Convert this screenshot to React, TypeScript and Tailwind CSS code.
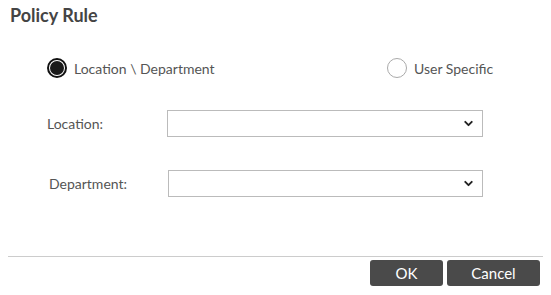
import { ChevronDown } from "lucide-react";

const Radio = ({ checked }: { checked?: boolean }) =>
  checked ? (
    <span className="flex h-[20px] w-[20px] items-center justify-center rounded-full border-[2px] border-[#111] bg-white">
      <span className="h-[14px] w-[14px] rounded-full bg-[#1a1a1a]" />
    </span>
  ) : (
    <span className="h-[20px] w-[20px] rounded-full border border-[#aaa] bg-white" />
  );

const Select = ({ className }: { className: string }) => (
  <div className={`flex h-[27px] items-center justify-end border border-[#bbb] bg-white pr-[7px] ${className}`}>
    <ChevronDown size={13} strokeWidth={3.5} className="text-[#222]" />
  </div>
);

const App = () => {
  return (
    <div className="h-[295px] w-[551px] bg-white font-['Lato',sans-serif] text-[#555]">
      {/* Header */}
      <div className="px-[10px] pt-[4px] text-[18px] font-bold leading-[22px] text-[#444]">Policy Rule</div>

      {/* Mode selection */}
      <div className="mt-[32px] flex h-[20px] items-center pl-[47px] text-[14px]">
        <div className="flex w-[340px] items-center gap-[7px]">
          <Radio checked />
          <span>Location \ Department</span>
        </div>
        <div className="flex items-center gap-[7px]">
          <Radio />
          <span>User Specific</span>
        </div>
      </div>

      {/* Fields */}
      <div className="mt-[32px] flex items-center text-[14px]">
        <span className="w-[167px] shrink-0 pl-[47px]">Location:</span>
        <Select className="w-[316px]" />
      </div>
      <div className="mt-[33px] flex items-center text-[14px]">
        <span className="w-[168px] shrink-0 pl-[49px]">Department:</span>
        <Select className="w-[315px]" />
      </div>

      {/* Footer */}
      <div className="mx-[8px] mt-[59px] h-px bg-[#ccc]" />
      <div className="mt-[3px] flex justify-end gap-[4px] pr-[11px] text-[15px] text-white">
        <button className="h-[26px] w-[73px] rounded-[3px] bg-[#4a4a4a]">OK</button>
        <button className="h-[26px] w-[93px] rounded-[3px] bg-[#4a4a4a]">Cancel</button>
      </div>
    </div>
  );
};

export default App;
